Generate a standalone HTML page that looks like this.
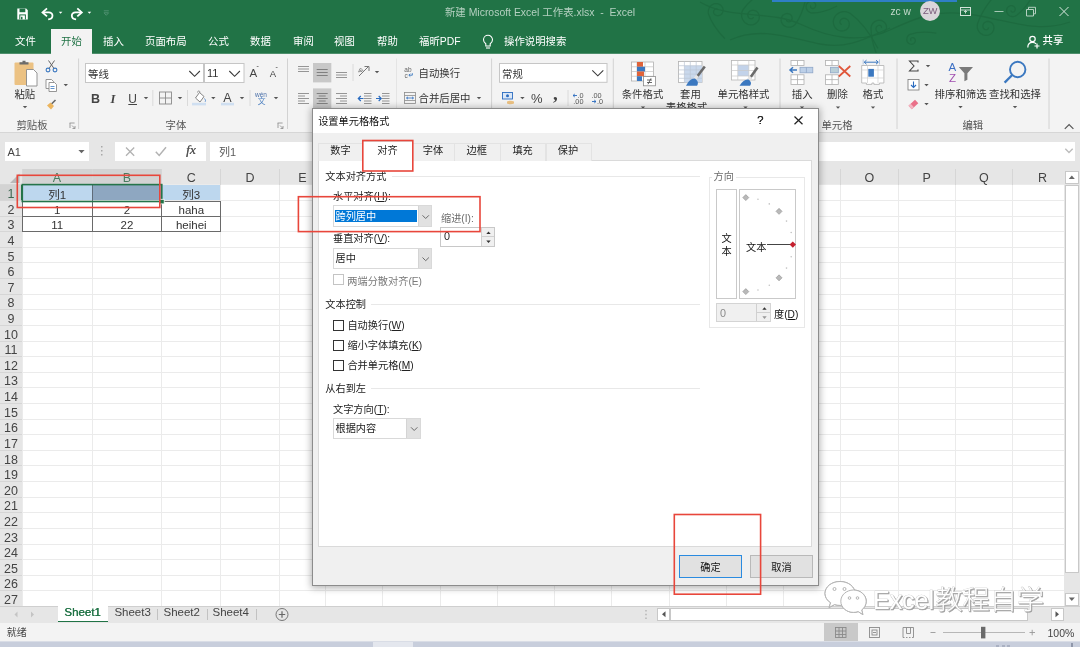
<!DOCTYPE html>
<html lang="zh-CN"><head><meta charset="utf-8"><title>Excel</title>
<style>
*{box-sizing:border-box;margin:0;padding:0}
html,body{width:1080px;height:647px;overflow:hidden;background:#fff}
#root{position:absolute;left:0;top:0;width:1080px;height:647px;overflow:hidden;will-change:transform}
body{font-family:"Liberation Sans","Noto Sans CJK SC",sans-serif;font-size:10.4px;color:#333;position:relative}
.a{position:absolute}
.t{position:absolute;white-space:nowrap;line-height:14px;height:14px}
.w{color:#fff}
.c{text-align:center}
#title{left:0;top:0;width:1080px;height:53px;background:#217346}
.gs{position:absolute;top:53px;height:1px;background:#4d8e6b;z-index:3}
#ribbon{left:0;top:53px;width:1080px;height:80px;background:#f3f3f3;border-bottom:1px solid #d6d6d6}
#fbar{left:0;top:133px;width:1080px;height:36px;background:#e6e6e6}
#grid{left:0;top:169px;width:1064px;height:437px;background:#fff;overflow:hidden}
.vl{position:absolute;top:0;width:1px;height:437px;background:#ebebeb}
.hl{position:absolute;left:0;height:1px;width:1064px;background:#ebebeb}
.ch{position:absolute;top:0;height:15.5px;line-height:19.5px;overflow:hidden;font-size:12.5px;color:#444;text-align:center}
.rh{position:absolute;left:0;width:22px;text-align:center;font-size:12.5px;color:#444;line-height:16px;height:15.6px}
.cell{position:absolute;text-align:center;font-size:11.5px;color:#333;line-height:16px;height:15.6px}
.sep{position:absolute;width:1px;background:#d8d8d8}
.grp{position:absolute;top:118px;height:14px;line-height:14px;font-size:10.4px;color:#555;text-align:center;white-space:nowrap}
.red{position:absolute;border:1.500px solid #e9493e}
.dd{position:absolute;background:#fff;border:1px solid #d9d9d9}
.ddb{position:absolute;right:0;top:0;bottom:0;width:13.500px;background:#e1e1e1;border-left:1px solid #d4d4d4}
.cb{position:absolute;width:11px;height:11px;border:1px solid #333;background:#fff}
.dl{position:absolute;font-size:10.2px;line-height:14px;height:14px;white-space:nowrap;color:#222}
u{text-decoration:underline}
</style></head>
<body>
<div id="root">
<div class="a" id="title">
<svg class="a" style="left:0;top:0" width="1080" height="53" viewBox="0 0 1080 53" fill="none" stroke="#1d6a3f" stroke-width="1.300" opacity="0.900"><path d="M724.9 38.7Q712.4 26.0 708.4 13.8L708.2 12.4L708.3 11.0L708.5 9.7L709.0 8.4L709.6 7.2L710.4 6.2L711.3 5.3L712.4 4.6L713.5 4.1L714.6 3.7L715.8 3.6L717.0 3.6L718.1 3.9L719.2 4.3L720.2 4.8L721.0 5.5L721.7 6.3L722.3 7.2L722.7 8.1L723.0 9.1L723.1 10.0L723.0 11.0L722.8 11.9L722.4 12.8L722.0 13.5L721.4 14.2L720.8 14.8L720.0 15.2L719.3 15.5L718.5 15.7L717.7 15.7L717.0 15.6L716.3 15.4L715.7 15.1L715.1 14.8L714.6 14.3L714.2 13.8L713.9 13.2L713.7 12.7L713.6 12.1L713.6 11.5L713.7 11.0L713.9 10.5L714.2 10.1L714.5 9.7L714.8 9.4L715.2 9.2L715.6 9.0L716.0 8.9L716.3 8.9L716.7 9.0L717.0 9.1L717.3 9.3L717.5 9.5L717.7 9.7L717.8 9.9"/><path d="M772.4 -13.7Q752.5 -3.4 743.1 9.5L742.3 11.1L741.8 12.7L741.6 14.4L741.6 16.0L741.9 17.6L742.4 19.1L743.2 20.5L744.1 21.7L745.2 22.8L746.5 23.6L747.8 24.3L749.2 24.7L750.6 24.9L752.0 24.8L753.4 24.6L754.6 24.1L755.8 23.4L756.8 22.6L757.7 21.7L758.4 20.6L758.9 19.5L759.2 18.3L759.3 17.2L759.3 16.0L759.0 14.9L758.6 13.9L758.1 12.9L757.4 12.1L756.6 11.4L755.7 10.9L754.8 10.5L753.9 10.3L752.9 10.2L752.0 10.3L751.1 10.5L750.3 10.9L749.6 11.3L749.0 11.9L748.5 12.5L748.1 13.2L747.9 13.9L747.8 14.6L747.8 15.3L747.9 16.0L748.1 16.6L748.4 17.2L748.7 17.7L749.2 18.1L749.6 18.4L750.1 18.6L750.6 18.7L751.1 18.8L751.6 18.7L752.0 18.6L752.4 18.4L752.7 18.2L753.0 17.9L753.2 17.6L753.3 17.3L753.3 17.0"/><path d="M807.0 -7.2Q803.7 12.6 795.3 24.3L794.3 25.3L793.1 26.1L791.9 26.7L790.6 27.0L789.3 27.2L788.0 27.2L786.7 26.9L785.6 26.5L784.5 25.9L783.5 25.2L782.7 24.3L782.0 23.3L781.6 22.3L781.3 21.2L781.1 20.1L781.2 19.0L781.4 18.0L781.8 17.0L782.3 16.1L782.9 15.3L783.7 14.7L784.5 14.2L785.3 13.8L786.2 13.6L787.1 13.5L788.0 13.6L788.8 13.8L789.6 14.1L790.3 14.5L790.9 15.0L791.4 15.6L791.7 16.3L792.0 17.0L792.1 17.7L792.2 18.3L792.1 19.0L791.9 19.6L791.6 20.2L791.3 20.7L790.9 21.1L790.4 21.4L789.9 21.6L789.4 21.8L788.9 21.8L788.4 21.8L788.0 21.7L787.6 21.5L787.2 21.3L787.0 21.1L786.7 20.8L786.6 20.4L786.5 20.1L786.4 19.8L786.5 19.5L786.5 19.2L786.6 19.0"/><path d="M877.9 48.4Q865.6 24.6 850.1 13.3L848.4 12.5L846.6 11.9L844.8 11.7L843.0 11.7L841.3 12.0L839.6 12.6L838.1 13.4L836.7 14.4L835.6 15.6L834.7 16.9L834.0 18.4L833.5 19.9L833.3 21.5L833.4 23.0L833.7 24.5L834.2 25.9L834.9 27.1L835.8 28.3L836.8 29.2L837.9 30.0L839.2 30.5L840.4 30.9L841.7 31.0L843.0 30.9L844.2 30.7L845.3 30.2L846.4 29.6L847.3 28.9L848.0 28.0L848.6 27.1L849.0 26.1L849.2 25.0L849.3 24.0L849.2 23.0L849.0 22.1L848.6 21.2L848.1 20.4L847.5 19.7L846.8 19.2L846.1 18.8L845.3 18.5L844.5 18.4L843.7 18.4L843.0 18.5L842.3 18.7L841.7 19.0L841.2 19.4L840.7 19.9L840.4 20.4L840.2 20.9L840.0 21.5L840.0 22.0L840.0 22.5L840.2 23.0L840.4 23.4L840.6 23.8L840.9 24.0L841.3 24.3L841.6 24.4L841.9 24.5"/><path d="M881.0 64.0Q871.0 44.0 871.0 28.0L871.2 26.6L871.7 25.3L872.3 24.1L873.1 23.0L874.1 22.1L875.2 21.3L876.3 20.8L877.5 20.4L878.8 20.2L880.0 20.3L881.2 20.5L882.3 20.9L883.3 21.5L884.2 22.2L885.0 23.0L885.6 23.9L886.1 24.9L886.4 25.9L886.5 27.0L886.5 28.0L886.2 29.0L885.9 29.9L885.4 30.8L884.8 31.5L884.1 32.1L883.3 32.6L882.5 33.0L881.7 33.2L880.8 33.2L880.0 33.2L879.2 33.0L878.5 32.7L877.8 32.3L877.3 31.8L876.8 31.2L876.4 30.6L876.2 29.9L876.0 29.3L876.0 28.6L876.1 28.0L876.3 27.4L876.5 26.9L876.9 26.4L877.3 26.0L877.7 25.7L878.2 25.5L878.6 25.3L879.1 25.3L879.6 25.3L880.0 25.4L880.4 25.5L880.7 25.7L881.0 26.0L881.2 26.3L881.4 26.6L881.5 26.9L881.5 27.2L881.5 27.5L881.5 27.8L881.4 28.0"/><path d="M837.2 6.0Q823.2 13.0 812.0 13.0L810.9 12.8L809.9 12.4L809.0 11.9L808.2 11.3L807.5 10.5L806.9 9.7L806.5 8.8L806.2 7.9L806.1 6.9L806.1 6.0L806.3 5.1L806.6 4.3L807.1 3.5L807.6 2.8L808.3 2.3L809.0 1.8L809.7 1.5L810.5 1.3L811.2 1.2L812.0 1.3L812.7 1.5L813.4 1.7L814.0 2.1L814.5 2.6L814.9 3.1L815.3 3.6L815.5 4.2L815.6 4.8L815.6 5.4L815.6 6.0L815.4 6.5L815.2 7.0L814.9 7.5L814.5 7.8L814.1 8.1L813.7 8.3L813.3 8.5L812.8 8.5L812.4 8.5L812.0 8.4L811.6 8.3L811.3 8.1L811.1 7.9L810.8 7.6L810.7 7.3L810.6 7.0L810.6 6.7L810.6 6.5L810.6 6.2L810.7 6.0L810.8 5.8L811.0 5.7"/><path d="M1000.2 -10.4Q982.9 7.2 977.5 23.9L977.3 25.5L977.3 27.0L977.5 28.5L978.0 29.9L978.7 31.2L979.6 32.4L980.6 33.4L981.8 34.2L983.0 34.8L984.3 35.2L985.7 35.3L987.0 35.3L988.3 35.1L989.5 34.6L990.6 34.0L991.5 33.3L992.4 32.4L993.0 31.4L993.5 30.3L993.8 29.2L993.9 28.1L993.9 27.0L993.7 25.9L993.3 25.0L992.8 24.1L992.1 23.3L991.4 22.6L990.5 22.1L989.7 21.8L988.8 21.5L987.9 21.5L987.0 21.5L986.2 21.7L985.4 22.1L984.7 22.5L984.1 23.0L983.6 23.6L983.3 24.3L983.0 25.0L982.9 25.7L982.9 26.3L983.0 27.0L983.1 27.6L983.4 28.2L983.8 28.6L984.2 29.0L984.6 29.4L985.1 29.6L985.6 29.7L986.1 29.8L986.6 29.7L987.0 29.6L987.4 29.5L987.7 29.2L988.0 29.0L988.2 28.7L988.4 28.4L988.4 28.0L988.5 27.7L988.4 27.5"/><path d="M1034.7 -7.7Q1026.5 8.1 1016.1 15.7L1015.1 16.1L1014.1 16.4L1013.0 16.6L1012.0 16.5L1011.0 16.3L1010.0 16.0L1009.2 15.5L1008.4 14.9L1007.8 14.2L1007.3 13.4L1006.9 12.6L1006.6 11.7L1006.6 10.9L1006.6 10.0L1006.8 9.2L1007.1 8.4L1007.5 7.7L1008.0 7.1L1008.6 6.6L1009.2 6.2L1009.9 5.9L1010.6 5.7L1011.3 5.7L1012.0 5.7L1012.6 5.9L1013.2 6.2L1013.8 6.5L1014.2 6.9L1014.6 7.4L1014.9 7.9L1015.1 8.4L1015.2 9.0L1015.2 9.5L1015.1 10.0L1015.0 10.5L1014.7 10.9L1014.5 11.3L1014.1 11.6L1013.8 11.8L1013.4 12.0L1013.0 12.1L1012.7 12.1L1012.3 12.1L1012.0 12.0L1011.7 11.8L1011.5 11.7L1011.3 11.4L1011.1 11.2L1011.0 11.0L1011.0 10.8L1011.0 10.5L1011.0 10.3"/><path d="M936.3 33.2Q920.8 30.8 910.1 34.3L909.3 34.7L908.6 35.3L908.0 36.0L907.5 36.7L907.1 37.5L906.9 38.3L906.8 39.2L906.8 40.0L906.9 40.8L907.2 41.6L907.6 42.2L908.1 42.8L908.7 43.3L909.3 43.7L909.9 44.0L910.6 44.2L911.3 44.3L912.0 44.2L912.6 44.1L913.2 43.8L913.8 43.5L914.3 43.1L914.6 42.6L914.9 42.1L915.2 41.6L915.3 41.1L915.3 40.5L915.3 40.0L915.1 39.5L914.9 39.1L914.6 38.7L914.3 38.3L914.0 38.0L913.6 37.8L913.2 37.7L912.8 37.7L912.4 37.7L912.0 37.7L911.7 37.9L911.4 38.0L911.1 38.2L910.9 38.5L910.7 38.7L910.6 39.0L910.6 39.3L910.6 39.5L910.6 39.8L910.7 40.0L910.8 40.2L911.0 40.3L911.1 40.5L911.3 40.5"/><path d="M700 2c30 18 70 8 100 22s60 20 90 6 50-22 90-14 60 16 90 6"/><path d="M730 40c30-14 60-2 90 4s50-8 70-16"/></svg><div class="a" style="left:772px;top:0;width:185px;height:1.5px;background:#2f7fc6"></div>
<svg class="a" style="left:0;top:0" width="130" height="28" viewBox="0 0 130 28" fill="none" stroke="#fff" stroke-width="1.3">
<path d="M17.300 8.600h8.900l1.600 1.600v9.200H17.300z" fill="#fff" stroke="none"/><rect x="19.500" y="8.600" width="5.800" height="3.600" fill="#217346" stroke="none"/><rect x="19.300" y="14.400" width="6.600" height="5" fill="#217346" stroke="none"/><rect x="20.300" y="15.400" width="4.600" height="4" fill="#fff" stroke="none"/><rect x="21" y="16.800" width="1.500" height="2.600" fill="#217346" stroke="none"/>
<path d="M47 8.400L42.500 12.400L47 16.400" stroke-width="1.800"/><path d="M43.200 12.400H48.800C53.600 12.400 54 18.800 48.200 19.300" stroke-width="1.800"/>
<path d="M58.800 11.800h3.600l-1.800 2z" fill="#fff" stroke="none"/>
<path d="M77.300 8.400L81.800 12.400L77.300 16.400" stroke-width="1.800"/><path d="M81.100 12.400H75.500C70.700 12.400 70.300 18.800 76.100 19.300" stroke-width="1.800"/>
<path d="M87.600 11.800h3.600l-1.800 2z" fill="#fff" stroke="none"/>
<path d="M103.800 10.800h5M104 12.800l2.300 2.500 2.300-2.500z" stroke="#4f9070" stroke-width="1"/>
</svg><div class="t" style="left:0;width:1080px;top:5.5px;text-align:center;color:#b4d0c0;font-size:10.45px;word-spacing:0px">新建 Microsoft Excel 工作表.xlsx &nbsp;-&nbsp; Excel</div>
<div class="t" style="left:890.5px;top:4.5px;color:#c3dacc;font-size:10.2px">zc w</div>
<div class="a" style="left:920px;top:1.2px;width:20px;height:20px;border-radius:50%;background:#dad6da;color:#7b5c7b;font-size:9.4px;line-height:20.5px;text-align:center;letter-spacing:-0.3px">ZW</div>
<svg class="a" style="left:955px;top:0" width="125" height="53" viewBox="0 0 125 53" fill="none" stroke="#fff" stroke-width="1">
<rect x="5.500" y="7.500" width="10" height="8" stroke="#d3e3d9"/><path d="M5.500 10h10M10.500 10.500v3M9 12l1.500-1.500L12 12" stroke="#d3e3d9" stroke-width="0.9"/>
<path d="M39.500 11.500h9" stroke="#a5c8b4"/>
<path d="M71.500 9.500h7v6.500h-7zM73.500 9.300v-2h7v6.500h-2" stroke="#b4d0c0"/>
<path d="M104.500 7l9 9M113.500 7l-9 9" stroke="#dbe8e0" stroke-width="1"/>
<circle cx="77.500" cy="39" r="2.700" stroke-width="1.200"/><path d="M72.800 47.500c0-3.600 2-5.200 4.700-5.200 1.600 0 2.800 0.500 3.600 1.500" stroke-width="1.200"/><path d="M82 43.500v5M79.500 46h5" stroke-width="1.2"/>
</svg><div class="t w" style="left:1042.5px;top:33.5px;font-size:10.4px;font-weight:500">共享</div>
<div class="a" style="left:51px;top:29px;width:41px;height:25px;background:#f3f3f3"></div>
<div class="t" style="left:15px;top:34.600px;color:#fff;font-size:10.4px">文件</div>
<div class="t" style="left:61px;top:34.600px;color:#217346;font-size:10.4px">开始</div>
<div class="t" style="left:103px;top:34.600px;color:#fff;font-size:10.4px">插入</div>
<div class="t" style="left:145px;top:34.600px;color:#fff;font-size:10.4px">页面布局</div>
<div class="t" style="left:208px;top:34.600px;color:#fff;font-size:10.4px">公式</div>
<div class="t" style="left:250px;top:34.600px;color:#fff;font-size:10.4px">数据</div>
<div class="t" style="left:293px;top:34.600px;color:#fff;font-size:10.4px">审阅</div>
<div class="t" style="left:334px;top:34.600px;color:#fff;font-size:10.4px">视图</div>
<div class="t" style="left:377px;top:34.600px;color:#fff;font-size:10.4px">帮助</div>
<div class="t" style="left:419px;top:34.600px;color:#fff;font-size:10.4px">福昕PDF</div>
<div class="t" style="left:504px;top:34.600px;color:#fff;font-size:10.4px">操作说明搜索</div>
<svg class="a" style="left:480px;top:32px" width="18" height="20" viewBox="0 0 18 20" fill="none" stroke="#fff" stroke-width="1.1">
<path d="M5.800 11.800c-1.500-1.200-2.300-2.500-2.300-4.100a4.500 4.500 0 0 1 9 0c0 1.600-0.800 2.900-2.300 4.100v2.200H5.800z"/><path d="M6 16h4"/></svg></div>
<div class="gs" style="left:0;width:51px"></div><div class="gs" style="left:92px;width:988px"></div>
<div class="a" id="ribbon">
<svg class="a" style="left:0;top:0" width="1080" height="80" viewBox="0 53 1080 80" fill="none" stroke-linecap="butt">
<path d="M78.6 58.5V129" stroke="#d2d2d2" stroke-width="1"/><path d="M287.5 58.5V129" stroke="#d2d2d2" stroke-width="1"/><path d="M396.5 58.5V129" stroke="#e4e4e4" stroke-width="1"/><path d="M491.6 58.5V129" stroke="#d2d2d2" stroke-width="1"/><path d="M613.3 58.5V129" stroke="#d2d2d2" stroke-width="1"/><path d="M780 58.5V129" stroke="#d2d2d2" stroke-width="1"/><path d="M897 58.5V129" stroke="#d2d2d2" stroke-width="1"/><path d="M1049 58.5V129" stroke="#d2d2d2" stroke-width="1"/><path d="M152.8 90V106" stroke="#dadada" stroke-width="1"/><path d="M187.5 90V106" stroke="#dadada" stroke-width="1"/><path d="M250 90V106" stroke="#dadada" stroke-width="1"/><path d="M353 64V81" stroke="#dadada" stroke-width="1"/><path d="M568 90V106" stroke="#dadada" stroke-width="1"/><rect x="14.5" y="62.500" width="19" height="22.500" rx="1" fill="#ecc283" stroke="none"/><path d="M19.500 64.500v-2.200h3v-1.600h3v1.600h3v2.200z" fill="#6b6b6b" stroke="none"/><path d="M26.500 69.500h7l3.500 3.500v13h-10.500z" fill="#fff" stroke="#8a8a8a" stroke-width="0.9"/><path d="M22.8 105.9h4.4l-2.2 2.3z" fill="#555" stroke="none"/><path d="M48.500 60.500l5.500 8M54.500 60.500l-5.500 8" stroke="#666" stroke-width="1"/><circle cx="48" cy="70" r="1.900" stroke="#3b78c0" stroke-width="1.100"/><circle cx="55" cy="70" r="1.900" stroke="#3b78c0" stroke-width="1.100"/><path d="M46 79.500h5.500l2 2v7h-7.500z" stroke="#8a8a8a" stroke-width="0.900" fill="#fff"/><path d="M49 82.500h5.500l2 2v7h-7.500z" stroke="#8a8a8a" stroke-width="0.900" fill="#fff"/><path d="M50.500 86.500h4M50.500 88.500h4" stroke="#3b78c0" stroke-width="0.800"/><path d="M63.6 83.9h4.4l-2.2 2.3z" fill="#555" stroke="none"/><path d="M55.500 100l-4 4" stroke="#666" stroke-width="1.600"/><path d="M47 105.500l3.500-3 3.500 3.500-3 3.500z" fill="#ecb55e" stroke="none"/><path d="M70 123v5M69.6 123h5" stroke="#888" stroke-width="0.800"/><path d="M72 125.500l2.800 2.800M75 126v2.500h-2.500" stroke="#888" stroke-width="0.800"/><path d="M278 123v5M277.6 123h5" stroke="#888" stroke-width="0.800"/><path d="M280 125.500l2.800 2.800M283 126v2.500h-2.500" stroke="#888" stroke-width="0.800"/><rect x="85.500" y="63.500" width="118" height="19" fill="#fff" stroke="#c6c6c6" stroke-width="1"/><rect x="204.500" y="63.500" width="39.500" height="19" fill="#fff" stroke="#c6c6c6" stroke-width="1"/><path d="M189.300 71l5.300 5.300 5.300-5.300" stroke="#3a3a3a" stroke-width="1.100"/><path d="M229.300 71l5.300 5.300 5.300-5.300" stroke="#3a3a3a" stroke-width="1.100"/><rect x="159.500" y="92" width="12" height="12" stroke="#8a8a8a" stroke-width="0.900"/><path d="M165.500 92v12M159.500 98h12" stroke="#8a8a8a" stroke-width="0.900"/><path d="M143.8 96.9h4.4l-2.2 2.3z" fill="#555" stroke="none"/><path d="M177.8 96.9h4.4l-2.2 2.3z" fill="#555" stroke="none"/><path d="M211.1 96.9h4.4l-2.2 2.3z" fill="#555" stroke="none"/><path d="M239.8 96.9h4.4l-2.2 2.3z" fill="#555" stroke="none"/><path d="M273.8 96.9h4.4l-2.2 2.3z" fill="#555" stroke="none"/><path d="M195.500 98l4-5.500 4.500 4-4 5.500z" stroke="#777" stroke-width="0.900" fill="#fff"/><path d="M197.500 92.500c0-2 2.500-2 2.500 0" stroke="#777" stroke-width="0.800"/><path d="M204.500 98.500c1 1.500 1.500 2.500 0.500 3.300" stroke="#5b8fd0" stroke-width="1"/><rect x="192" y="102.800" width="14" height="2.600" fill="#cfdff1" stroke="none"/><rect x="221" y="102.800" width="13" height="2.600" fill="#cfdff1" stroke="none"/><rect x="313" y="63" width="18.300" height="19.400" fill="#c8c8c8" stroke="none"/><rect x="313" y="88.400" width="18.300" height="19.600" fill="#c8c8c8" stroke="none"/><path d="M298 66.5h11M298 69h11M298 71.5h11" stroke="#8a8a8a" stroke-width="0.900"/><path d="M316.7 69.5h11M316.7 72.5h11M316.7 75.5h11" stroke="#777" stroke-width="0.900"/><path d="M336 72.5h11M336 75h11M336 77.5h11" stroke="#8a8a8a" stroke-width="0.900"/><path d="M298 93.5h11M298 96h7M298 98.5h11M298 101h7M298 103.5h11" stroke="#8a8a8a" stroke-width="0.900"/><path d="M316.7 93.5h11M318.7 96h7M316.7 98.5h11M318.7 101h7M316.7 103.5h11" stroke="#777" stroke-width="0.900"/><path d="M336 93.5h11M340 96h7M336 98.5h11M340 101h7M336 103.5h11" stroke="#8a8a8a" stroke-width="0.900"/><path d="M359 76l9-9" stroke="#777" stroke-width="1"/><path d="M364.500 66.500h4.500v4.500" stroke="#777" stroke-width="1"/><path d="M359.500 69.500l3 3M358.500 72l2-4 2.500 2.500z" stroke="#777" stroke-width="0.700"/><path d="M374.8 70.9h4.4l-2.2 2.3z" fill="#555" stroke="none"/><path d="M364 93.5h7.5M364 96h7.5M364 98.5h7.5M364 101h7.5M364 103.5h7.5" stroke="#8a8a8a" stroke-width="0.900"/><path d="M363.500 98.500h-5M360.800 96l-2.500 2.500 2.500 2.500" stroke="#2b6cc0" stroke-width="1.200"/><path d="M382 93.5h7.5M382 96h7.5M382 98.5h7.5M382 101h7.5M382 103.5h7.5" stroke="#8a8a8a" stroke-width="0.900"/><path d="M376 98.500h5M378.700 96l2.500 2.500-2.500 2.500" stroke="#2b6cc0" stroke-width="1.200"/><path d="M412.300 73.200v2h-3.300M410.300 73.800l-1.500 1.400 1.500 1.400" stroke="#3b78c0" stroke-width="0.900"/><path d="M412 68.300l1.500-1.500 1.500 1.500" stroke="#3b78c0" stroke-width="0.800" opacity="0"/><rect x="404.500" y="92.500" width="11" height="11" stroke="#8a8a8a" stroke-width="0.800"/><path d="M404.500 95.500h11M404.500 100.500h11" stroke="#8a8a8a" stroke-width="0.800"/><path d="M406.500 98h7M408 96.800l-1.500 1.200 1.500 1.200M412 96.800l1.500 1.200-1.500 1.200" stroke="#2b6cc0" stroke-width="0.800"/><path d="M476.8 96.9h4.4l-2.2 2.3z" fill="#555" stroke="none"/><rect x="499.500" y="63.500" width="107.500" height="18.800" fill="#fff" stroke="#c6c6c6" stroke-width="1"/><path d="M592.300 70.300l5.500 5.500 5.500-5.500" stroke="#3a3a3a" stroke-width="1.100"/><rect x="502.500" y="92.500" width="10" height="6.500" stroke="#2b6cc0" stroke-width="0.900" fill="#dbe7f6"/><circle cx="507.500" cy="95.800" r="1.500" fill="#2b6cc0" stroke="none"/><path d="M507 101.500c2-1 5-1 7 0v2c-2 1-5 1-7 0z" fill="#ecc283" stroke="none"/><path d="M520.2 96.9h4.4l-2.2 2.3z" fill="#555" stroke="none"/><path d="M573 95.500h4M574.800 94l-1.800 1.500 1.800 1.500" stroke="#2b6cc0" stroke-width="0.900"/><path d="M592 101.500h4M594.200 100l1.800 1.500-1.800 1.500" stroke="#2b6cc0" stroke-width="0.900"/><rect x="631.500" y="62" width="22" height="19" fill="#fff" stroke="#b0b0b0" stroke-width="0.800"/><path d="M637 62v19M645 62v19M631.500 66.750h22M631.500 71.500h22M631.500 76.250h22" stroke="#c4c4c4" stroke-width="0.700"/><rect x="637" y="62" width="6" height="4.750" fill="#e0633a" stroke="none"/><rect x="637" y="66.750" width="8" height="4.750" fill="#3b78c0" stroke="none"/><rect x="637" y="71.500" width="7" height="4.750" fill="#e0633a" stroke="none"/><rect x="637" y="76.250" width="5" height="4.750" fill="#3b78c0" stroke="none"/><rect x="643.500" y="76.500" width="12" height="9.300" fill="#fff" stroke="#8a8a8a" stroke-width="0.800"/><path d="M647 80h5M647 82.500h5M651 78.300l-3 6" stroke="#444" stroke-width="0.800"/><path d="M640.8 106.4h4.4l-2.2 2.3z" fill="#555" stroke="none"/><path d="M743.3 106.4h4.4l-2.2 2.3z" fill="#555" stroke="none"/><rect x="678.500" y="61.500" width="23.500" height="21" fill="#fff" stroke="#b0b0b0" stroke-width="0.800"/><rect x="684.400" y="65.700" width="17.600" height="16.800" fill="#c9d8ec" stroke="none"/><path d="M684.400 61.500v21M690.300 61.500v21M696.200 61.500v21M678.500 65.700h23.500M678.500 69.900h23.500M678.500 74.100h23.500M678.500 78.300h23.500" stroke="#bcc6d4" stroke-width="0.700"/><path d="M704.800 66.500l-8 10.500" stroke="#6a6a6a" stroke-width="2.600"/><path d="M697.500 75.800l-3 3.500" stroke="#e6e6e6" stroke-width="3.200"/><path d="M695 78.500c-3.500-0.500-6.500 2.500-9 7.200h11c1.500-2 1.300-4.700-2-7.200z" fill="#3b78c0" stroke="none"/><rect x="731.500" y="60.500" width="23.500" height="19.500" fill="#fff" stroke="#b6b6b6" stroke-width="0.800"/><rect x="737.800" y="65" width="11" height="11" fill="#c3d3ea" stroke="none"/><path d="M737.800 60.500v19.500M748.800 60.500v19.500M731.500 65h23.500M731.500 70.500h23.500M731.500 76h23.500" stroke="#c9c9c9" stroke-width="0.700"/><path d="M757.500 67.500l-7.500 10.500" stroke="#6a6a6a" stroke-width="2.600"/><path d="M750.800 76.800l-2.500 3" stroke="#e6e6e6" stroke-width="3.200"/><path d="M748.500 79.500c-3.500-0.500-6.500 2-9 6.200h10.500c1.500-1.800 1.500-4-1.500-6.200z" fill="#3b78c0" stroke="none"/><rect x="791" y="60.500" width="13" height="5" fill="#fff" stroke="#b0b0b0" stroke-width="0.800"/><path d="M797.500 60.500v5" stroke="#b0b0b0" stroke-width="0.800"/><rect x="800" y="67.300" width="12.800" height="5.500" fill="#bdd0e8" stroke="#8fa7c8" stroke-width="0.800"/><path d="M806.400 67.300v5.500" stroke="#8fa7c8" stroke-width="0.800"/><rect x="791" y="74.800" width="13" height="9.600" fill="#fff" stroke="#b0b0b0" stroke-width="0.800"/><path d="M797.500 74.800v9.600M791 79.600h13" stroke="#b0b0b0" stroke-width="0.800"/><path d="M790 70h7M793 67.200l-3 2.800 3 2.800" stroke="#3b78c0" stroke-width="1.500"/><path d="M799.8 106.4h4.4l-2.2 2.3z" fill="#555" stroke="none"/><rect x="825.500" y="60.500" width="12.800" height="5" fill="#fff" stroke="#b0b0b0" stroke-width="0.800"/><path d="M832 60.500v5" stroke="#b0b0b0" stroke-width="0.800"/><rect x="830.500" y="67.300" width="7.800" height="5.500" fill="#b9cfd8" stroke="#8fa7c8" stroke-width="0.800"/><rect x="825.500" y="74.800" width="12.800" height="9.600" fill="#fff" stroke="#b0b0b0" stroke-width="0.800"/><path d="M832 74.800v9.600M825.500 79.600h12.800" stroke="#b0b0b0" stroke-width="0.800"/><path d="M838.800 66l11.500 10.500M850.300 66l-11.500 10.500" stroke="#e0563a" stroke-width="1.700"/><path d="M835.8 106.4h4.4l-2.2 2.3z" fill="#555" stroke="none"/><path d="M864.500 62.200h13.500M866.500 60.200l-2.300 2 2.300 2M876 60.200l2.300 2-2.300 2" stroke="#3b78c0" stroke-width="1"/><path d="M863.200 59.500v5M879.500 59.500v5" stroke="#9ab3d6" stroke-width="0.700"/><path d="M861.700 65.500h22.200v17.500h-4.500v1.400h-5.500v-1.400h-2v1.400h-5.500v-1.400h-4.700z" fill="#fff" stroke="#b0b0b0" stroke-width="0.800"/><path d="M867.500 65.500v17.500M878 65.500v17.500M861.700 70h22.200M861.700 78h22.200" stroke="#d0d0d0" stroke-width="0.700"/><rect x="868.300" y="68.900" width="5.600" height="7.800" fill="#3b78c0" stroke="none"/><path d="M870.8 106.4h4.4l-2.2 2.3z" fill="#555" stroke="none"/><path d="M918 62.500v-1.500h-8.500l4.500 5-4.500 5h8.500v-1.500" stroke="#444" stroke-width="1.100"/><path d="M925.8 64.9h4.4l-2.2 2.3z" fill="#555" stroke="none"/><path d="M924.3 83.9h4.4l-2.2 2.3z" fill="#555" stroke="none"/><path d="M924.3 102.9h4.4l-2.2 2.3z" fill="#555" stroke="none"/><rect x="908" y="79.500" width="11" height="10.500" fill="#fff" stroke="#777" stroke-width="0.800"/><path d="M913.500 81.500v6M911 85l2.500 2.500 2.500-2.500" stroke="#2b6cc0" stroke-width="1.100"/><path d="M908.500 105.800l6.500-6 3.300 3.500-6.500 6z" fill="#ea7089" stroke="none"/><path d="M908.500 105.800l2.200-2 3.300 3.500-2.200 2z" fill="#f2b6c2" stroke="none"/><path d="M958.800 67h14.200l-5.600 6.300v6.400l-3 1.500v-7.900z" fill="#7a7a7a" stroke="none"/><circle cx="1017.700" cy="69.500" r="7.700" stroke="#3b78c0" stroke-width="1.900"/><path d="M1012.200 75l-7.600 7.600" stroke="#3b78c0" stroke-width="2.300"/><path d="M958.3 105.9h4.4l-2.2 2.3z" fill="#555" stroke="none"/><path d="M1012.8 105.9h4.4l-2.2 2.3z" fill="#555" stroke="none"/><path d="M1064.800 128.800l4.300-4.300 4.300 4.300" stroke="#555" stroke-width="1.200"/></svg>
<div class="t" style="left:14.4px;top:35.4px;font-size:10.4px;color:#333;">粘贴</div>
<div class="t c" style="left:-28px;width:120px;top:66px;font-size:10.4px;color:#555;">剪贴板</div>
<div class="t c" style="left:116px;width:120px;top:66px;font-size:10.4px;color:#555;">字体</div>
<div class="t" style="left:88px;top:14.5px;font-size:10.4px;color:#333;">等线</div>
<div class="t" style="left:207px;top:13.3px;font-size:11px;color:#333;">11</div>
<div class="t" style="left:249.5px;top:13.3px;font-size:11.5px;color:#444;">A</div>
<div class="t" style="left:256.5px;top:8.5px;font-size:7px;color:#444;">ˆ</div>
<div class="t" style="left:269.8px;top:14.3px;font-size:9.5px;color:#444;">A</div>
<div class="t" style="left:275.5px;top:9.5px;font-size:7px;color:#444;">ˇ</div>
<div class="t" style="left:91px;top:39px;font-size:12.5px;color:#444;font-weight:bold">B</div>
<div class="t" style="left:110.5px;top:39px;font-size:12.5px;color:#444;font-style:italic;font-family:'Liberation Serif',serif;font-weight:bold">I</div>
<div class="t" style="left:128.3px;top:39px;font-size:12px;color:#444;text-decoration:underline">U</div>
<div class="t" style="left:223.3px;top:37.5px;font-size:12.5px;color:#444;">A</div>
<div class="t" style="left:255px;top:34.5px;font-size:6.5px;color:#4a6fa8;">wén</div>
<div class="t" style="left:257.8px;top:41.5px;font-size:7.8px;color:#4a7fc0;">文</div>
<div class="t" style="left:404.3px;top:10.3px;font-size:6.5px;color:#666;">ab</div>
<div class="t" style="left:404.6px;top:15.8px;font-size:6.5px;color:#666;">c</div>
<div class="t" style="left:418.5px;top:13.7px;font-size:10.4px;color:#333;">自动换行</div>
<div class="t" style="left:418.5px;top:39px;font-size:10.4px;color:#333;">合并后居中</div>
<div class="t" style="left:502px;top:14.5px;font-size:10.4px;color:#333;">常规</div>
<div class="t" style="left:531px;top:39px;font-size:13px;color:#444;">%</div>
<div class="t" style="left:553px;top:33.5px;font-size:19px;color:#444;font-weight:bold;font-family:'Liberation Serif',serif">,</div>
<div class="t" style="left:577.5px;top:35.5px;font-size:7.3px;color:#555;">.0</div>
<div class="t" style="left:573.3px;top:42.3px;font-size:7.3px;color:#555;">.00</div>
<div class="t" style="left:591.5px;top:35.5px;font-size:7.3px;color:#555;">.00</div>
<div class="t" style="left:597px;top:42.3px;font-size:7.3px;color:#555;">.0</div>
<div class="t c" style="left:582.5px;width:120px;top:35.4px;font-size:10.4px;color:#333;">条件格式</div>
<div class="t c" style="left:630.5px;width:120px;top:35.4px;font-size:10.4px;color:#333;">套用</div>
<div class="t c" style="left:629.5px;width:120px;top:48.2px;font-size:10.4px;color:#333;">表格格式 <span style="font-size:6px">▾</span></div>
<div class="t c" style="left:683.5px;width:120px;top:35.4px;font-size:10.4px;color:#333;">单元格样式</div>
<div class="t c" style="left:742.2px;width:120px;top:35.4px;font-size:10.4px;color:#333;">插入</div>
<div class="t c" style="left:777.5px;width:120px;top:35.4px;font-size:10.4px;color:#333;">删除</div>
<div class="t c" style="left:813px;width:120px;top:35.4px;font-size:10.4px;color:#333;">格式</div>
<div class="t c" style="left:777px;width:120px;top:65.5px;font-size:10.4px;color:#555;">单元格</div>
<div class="t" style="left:948.6px;top:6.8px;font-size:11.5px;color:#3b6fc4;">A</div>
<div class="t" style="left:949px;top:18px;font-size:11.5px;color:#a04fb0;">Z</div>
<div class="t c" style="left:900.6px;width:120px;top:35.4px;font-size:10.4px;color:#333;">排序和筛选</div>
<div class="t c" style="left:955px;width:120px;top:35.4px;font-size:10.4px;color:#333;">查找和选择</div>
<div class="t c" style="left:912.8px;width:120px;top:65.5px;font-size:10.4px;color:#555;">编辑</div>
</div>
<div class="a" id="fbar">
<div class="a" style="left:5px;top:9px;width:84px;height:18.500px;background:#fff"></div><div class="a" style="left:115px;top:9px;width:90.500px;height:18.500px;background:#fff"></div><div class="a" style="left:210px;top:9px;width:864.800px;height:18.500px;background:#fff"></div>
<div class="t" style="left:7.500px;top:11.500px;font-size:11px;color:#444">A1</div><div class="t" style="left:219px;top:11.500px;font-size:11px;color:#5a5a5a">列1</div>
<svg class="a" style="left:0;top:0" width="1080" height="36" viewBox="0 133 1080 36" fill="none">
<path d="M78.400 150h6.200l-3.100 3.300z" fill="#666"/>
<path d="M101.800 146v1.400M101.800 150v1.400M101.800 154v1.400" stroke="#9a9a9a" stroke-width="1.200"/>
<path d="M126 147.500l8.200 8.200M134.200 147.500l-8.200 8.200" stroke="#b2b2b2" stroke-width="1.300"/>
<path d="M155.800 151.800l3.400 3.600 6.800-8.200" stroke="#b2b2b2" stroke-width="1.500"/>
<path d="M1065.300 148.800l3.700 3.700 3.700-3.700" stroke="#bcbcbc" stroke-width="1.400"/>
</svg><div class="t" style="left:186px;top:10px;font-size:13.500px;color:#555;text-shadow:0.300px 0 0 #555;font-family:'Liberation Serif',serif;font-style:italic">fx</div>
</div>
<div class="a" id="grid">
<div class="a" style="left:0;top:0;width:1064px;height:15.500px;background:#e6e6e6"></div><div class="a" style="left:0;top:15.500px;width:22.300px;height:422px;background:#e6e6e6"></div><div class="a" style="left:22.300px;top:0;width:139.500px;height:15.500px;background:#d3d3d3;border-bottom:1px solid #217346"></div><div class="a" style="left:0;top:15.500px;width:22.300px;height:16.900px;background:#d3d3d3;border-right:1px solid #217346"></div><svg class="a" style="left:0;top:0" width="23" height="16" viewBox="0 0 23 16"><path d="M19.500 4.500v9.500h-9.500z" fill="#b9b9b9"/></svg>
<div class="a" style="left:22.300px;top:15.500px;width:70px;height:16.900px;background:#bdd7ee"></div><div class="a" style="left:92px;top:15.500px;width:69.800px;height:16.900px;background:#8ea7c1"></div><div class="a" style="left:161.800px;top:15.500px;width:59px;height:16.900px;background:#bdd7ee"></div>
<div class="vl" style="left:21.5px;"></div><div class="vl" style="left:91.5px;"></div><div class="vl" style="left:161.3px;"></div><div class="vl" style="left:220.3px;"></div><div class="vl" style="left:278.7px;"></div><div class="vl" style="left:325.1px;"></div><div class="vl" style="left:382.35px;"></div><div class="vl" style="left:439.6px;"></div><div class="vl" style="left:496.85px;"></div><div class="vl" style="left:554.1px;"></div><div class="vl" style="left:611.35px;"></div><div class="vl" style="left:668.6px;"></div><div class="vl" style="left:725.85px;"></div><div class="vl" style="left:783.1px;"></div><div class="vl" style="left:840.35px;"></div><div class="vl" style="left:897.6px;"></div><div class="vl" style="left:954.85px;"></div><div class="vl" style="left:1012.1px;"></div><div class="hl" style="top:15px"></div><div class="hl" style="top:31.015px"></div><div class="hl" style="top:46.63px"></div><div class="hl" style="top:62.245px"></div><div class="hl" style="top:77.86px"></div><div class="hl" style="top:93.475px"></div><div class="hl" style="top:109.09px"></div><div class="hl" style="top:124.705px"></div><div class="hl" style="top:140.32px"></div><div class="hl" style="top:155.935px"></div><div class="hl" style="top:171.55px"></div><div class="hl" style="top:187.165px"></div><div class="hl" style="top:202.78px"></div><div class="hl" style="top:218.395px"></div><div class="hl" style="top:234.01px"></div><div class="hl" style="top:249.625px"></div><div class="hl" style="top:265.24px"></div><div class="hl" style="top:280.855px"></div><div class="hl" style="top:296.47px"></div><div class="hl" style="top:312.085px"></div><div class="hl" style="top:327.7px"></div><div class="hl" style="top:343.315px"></div><div class="hl" style="top:358.93px"></div><div class="hl" style="top:374.545px"></div><div class="hl" style="top:390.16px"></div><div class="hl" style="top:405.775px"></div><div class="hl" style="top:421.39px"></div><div class="hl" style="top:437.005px"></div>
<div class="a" style="left:21.5px;top:0;width:1px;height:15.500px;background:#d6d6d6"></div><div class="a" style="left:91.5px;top:0;width:1px;height:15.500px;background:#d6d6d6"></div><div class="a" style="left:161.3px;top:0;width:1px;height:15.500px;background:#d6d6d6"></div><div class="a" style="left:220.3px;top:0;width:1px;height:15.500px;background:#d6d6d6"></div><div class="a" style="left:278.7px;top:0;width:1px;height:15.500px;background:#d6d6d6"></div><div class="a" style="left:325.1px;top:0;width:1px;height:15.500px;background:#d6d6d6"></div><div class="a" style="left:382.35px;top:0;width:1px;height:15.500px;background:#d6d6d6"></div><div class="a" style="left:439.6px;top:0;width:1px;height:15.500px;background:#d6d6d6"></div><div class="a" style="left:496.85px;top:0;width:1px;height:15.500px;background:#d6d6d6"></div><div class="a" style="left:554.1px;top:0;width:1px;height:15.500px;background:#d6d6d6"></div><div class="a" style="left:611.35px;top:0;width:1px;height:15.500px;background:#d6d6d6"></div><div class="a" style="left:668.6px;top:0;width:1px;height:15.500px;background:#d6d6d6"></div><div class="a" style="left:725.85px;top:0;width:1px;height:15.500px;background:#d6d6d6"></div><div class="a" style="left:783.1px;top:0;width:1px;height:15.500px;background:#d6d6d6"></div><div class="a" style="left:840.35px;top:0;width:1px;height:15.500px;background:#d6d6d6"></div><div class="a" style="left:897.6px;top:0;width:1px;height:15.500px;background:#d6d6d6"></div><div class="a" style="left:954.85px;top:0;width:1px;height:15.500px;background:#d6d6d6"></div><div class="a" style="left:1012.1px;top:0;width:1px;height:15.500px;background:#d6d6d6"></div><div class="a" style="left:0;top:15px;width:22.300px;height:1px;background:#d6d6d6"></div><div class="a" style="left:0;top:31.015px;width:22.300px;height:1px;background:#d6d6d6"></div><div class="a" style="left:0;top:46.63px;width:22.300px;height:1px;background:#d6d6d6"></div><div class="a" style="left:0;top:62.245px;width:22.300px;height:1px;background:#d6d6d6"></div><div class="a" style="left:0;top:77.86px;width:22.300px;height:1px;background:#d6d6d6"></div><div class="a" style="left:0;top:93.475px;width:22.300px;height:1px;background:#d6d6d6"></div><div class="a" style="left:0;top:109.09px;width:22.300px;height:1px;background:#d6d6d6"></div><div class="a" style="left:0;top:124.705px;width:22.300px;height:1px;background:#d6d6d6"></div><div class="a" style="left:0;top:140.32px;width:22.300px;height:1px;background:#d6d6d6"></div><div class="a" style="left:0;top:155.935px;width:22.300px;height:1px;background:#d6d6d6"></div><div class="a" style="left:0;top:171.55px;width:22.300px;height:1px;background:#d6d6d6"></div><div class="a" style="left:0;top:187.165px;width:22.300px;height:1px;background:#d6d6d6"></div><div class="a" style="left:0;top:202.78px;width:22.300px;height:1px;background:#d6d6d6"></div><div class="a" style="left:0;top:218.395px;width:22.300px;height:1px;background:#d6d6d6"></div><div class="a" style="left:0;top:234.01px;width:22.300px;height:1px;background:#d6d6d6"></div><div class="a" style="left:0;top:249.625px;width:22.300px;height:1px;background:#d6d6d6"></div><div class="a" style="left:0;top:265.24px;width:22.300px;height:1px;background:#d6d6d6"></div><div class="a" style="left:0;top:280.855px;width:22.300px;height:1px;background:#d6d6d6"></div><div class="a" style="left:0;top:296.47px;width:22.300px;height:1px;background:#d6d6d6"></div><div class="a" style="left:0;top:312.085px;width:22.300px;height:1px;background:#d6d6d6"></div><div class="a" style="left:0;top:327.7px;width:22.300px;height:1px;background:#d6d6d6"></div><div class="a" style="left:0;top:343.315px;width:22.300px;height:1px;background:#d6d6d6"></div><div class="a" style="left:0;top:358.93px;width:22.300px;height:1px;background:#d6d6d6"></div><div class="a" style="left:0;top:374.545px;width:22.300px;height:1px;background:#d6d6d6"></div><div class="a" style="left:0;top:390.16px;width:22.300px;height:1px;background:#d6d6d6"></div><div class="a" style="left:0;top:405.775px;width:22.300px;height:1px;background:#d6d6d6"></div><div class="a" style="left:0;top:421.39px;width:22.300px;height:1px;background:#d6d6d6"></div><div class="a" style="left:0;top:437.005px;width:22.300px;height:1px;background:#d6d6d6"></div>
<div class="ch" style="left:22px;width:70px;color:#4a7b60">A</div><div class="ch" style="left:92px;width:69.8px;color:#4a7b60">B</div><div class="ch" style="left:161.8px;width:59px;color:#444">C</div><div class="ch" style="left:220.8px;width:58.4px;color:#444">D</div><div class="ch" style="left:279.2px;width:46.4px;color:#444">E</div><div class="ch" style="left:325.6px;width:57.25px;color:#444">F</div><div class="ch" style="left:382.85px;width:57.25px;color:#444">G</div><div class="ch" style="left:440.1px;width:57.25px;color:#444">H</div><div class="ch" style="left:497.35px;width:57.25px;color:#444">I</div><div class="ch" style="left:554.6px;width:57.25px;color:#444">J</div><div class="ch" style="left:611.85px;width:57.25px;color:#444">K</div><div class="ch" style="left:669.1px;width:57.25px;color:#444">L</div><div class="ch" style="left:726.35px;width:57.25px;color:#444">M</div><div class="ch" style="left:783.6px;width:57.25px;color:#444">N</div><div class="ch" style="left:840.85px;width:57.25px;color:#444">O</div><div class="ch" style="left:898.1px;width:57.25px;color:#444">P</div><div class="ch" style="left:955.35px;width:57.25px;color:#444">Q</div><div class="ch" style="left:1012.6px;width:59.6px;color:#444">R</div>
<div class="rh" style="top:17.1px;color:#3d6650">1</div><div class="rh" style="top:32.715px;color:#444">2</div><div class="rh" style="top:48.33px;color:#444">3</div><div class="rh" style="top:63.945px;color:#444">4</div><div class="rh" style="top:79.56px;color:#444">5</div><div class="rh" style="top:95.175px;color:#444">6</div><div class="rh" style="top:110.79px;color:#444">7</div><div class="rh" style="top:126.405px;color:#444">8</div><div class="rh" style="top:142.02px;color:#444">9</div><div class="rh" style="top:157.635px;color:#444">10</div><div class="rh" style="top:173.25px;color:#444">11</div><div class="rh" style="top:188.865px;color:#444">12</div><div class="rh" style="top:204.48px;color:#444">13</div><div class="rh" style="top:220.095px;color:#444">14</div><div class="rh" style="top:235.71px;color:#444">15</div><div class="rh" style="top:251.325px;color:#444">16</div><div class="rh" style="top:266.94px;color:#444">17</div><div class="rh" style="top:282.555px;color:#444">18</div><div class="rh" style="top:298.17px;color:#444">19</div><div class="rh" style="top:313.785px;color:#444">20</div><div class="rh" style="top:329.4px;color:#444">21</div><div class="rh" style="top:345.015px;color:#444">22</div><div class="rh" style="top:360.63px;color:#444">23</div><div class="rh" style="top:376.245px;color:#444">24</div><div class="rh" style="top:391.86px;color:#444">25</div><div class="rh" style="top:407.475px;color:#444">26</div><div class="rh" style="top:423.09px;color:#444">27</div><div class="rh" style="top:438.705px;color:#444">28</div>
<div class="a" style="left:22.3px;top:31.915px;width:198.5px;height:1px;background:#6a6a6a"></div><div class="a" style="left:22.3px;top:46.83px;width:198.5px;height:1px;background:#6a6a6a"></div><div class="a" style="left:22.3px;top:62.345px;width:198.5px;height:1px;background:#6a6a6a"></div><div class="a" style="left:21.8px;top:32.415px;width:1px;height:30.43px;background:#6a6a6a"></div><div class="a" style="left:91.5px;top:32.415px;width:1px;height:30.43px;background:#6a6a6a"></div><div class="a" style="left:161.3px;top:32.415px;width:1px;height:30.43px;background:#6a6a6a"></div><div class="a" style="left:220.3px;top:32.415px;width:1px;height:30.43px;background:#6a6a6a"></div><div class="a" style="left:91.500px;top:15.5px;width:1px;height:16.915px;background:#5f6b78"></div>
<div class="cell" style="left:22.3px;width:69.7px;top:17.8px">列1</div><div class="cell" style="left:161.8px;width:59px;top:17.8px">列3</div><div class="cell" style="left:22.3px;width:69.7px;top:32.915px">1</div><div class="cell" style="left:92px;width:69.8px;top:32.915px">2</div><div class="cell" style="left:161.8px;width:59px;top:32.915px">haha</div><div class="cell" style="left:22.3px;width:69.7px;top:47.83px">11</div><div class="cell" style="left:92px;width:69.8px;top:47.83px">22</div><div class="cell" style="left:161.8px;width:59px;top:47.83px">heihei</div>
<svg class="a" style="left:0;top:0" width="240" height="50" viewBox="0 0 240 50" fill="none"><rect x="22.300" y="15.600" width="139.500" height="16.900" stroke="#25744a" stroke-width="1.600"/><rect x="159.600" y="30.300" width="4.600" height="4.600" fill="#217346" stroke="#fff" stroke-width="0.800"/></svg>
</div>
<div class="a" style="left:1064px;top:169px;width:16px;height:437.500px;background:#e6e6e6"></div><div class="a" style="left:1065px;top:170.500px;width:13.500px;height:13.500px;background:#fff;border:1px solid #c8c8c8"></div><div class="a" style="left:1065px;top:184.500px;width:13.500px;height:388px;background:#fff;border:1px solid #c8c8c8"></div><div class="a" style="left:1065px;top:592.500px;width:13.500px;height:13.500px;background:#fff;border:1px solid #c8c8c8"></div><svg class="a" style="left:1064px;top:169px" width="16" height="438" viewBox="0 0 16 438"><path d="M4.800 10h6l-3-3.500z" fill="#666"/><path d="M4.800 428.500h6l-3 3.500z" fill="#666"/></svg>
<div class="a" style="left:0;top:606px;width:1080px;height:17px;background:#e6e6e6;border-top:1px solid #cfcfcf"></div><div class="a" style="left:58.300px;top:606px;width:50px;height:15.800px;background:#fff;border-bottom:1.600px solid #217346"></div><div class="t" style="left:64.300px;top:605.300px;font-size:11.500px;color:#217346;text-shadow:0.300px 0 0 #217346">Sheet1</div><div class="t" style="left:114.4px;top:605.300px;font-size:11.500px;color:#444">Sheet3</div><div class="t" style="left:163.5px;top:605.300px;font-size:11.500px;color:#444">Sheet2</div><div class="t" style="left:212.5px;top:605.300px;font-size:11.500px;color:#444">Sheet4</div><div class="a" style="left:157.2px;top:609px;width:1px;height:11px;background:#c2c2c2"></div><div class="a" style="left:207px;top:609px;width:1px;height:11px;background:#c2c2c2"></div><div class="a" style="left:255.5px;top:609px;width:1px;height:11px;background:#c2c2c2"></div><svg class="a" style="left:0;top:606px" width="300" height="17" viewBox="0 606 300 17" fill="none">
<path d="M17.500 611.500l-3 3 3 3z" fill="#c4c4c4"/><path d="M31 611.500l3 3-3 3z" fill="#c4c4c4"/>
<circle cx="282" cy="614.500" r="6" stroke="#777" stroke-width="1"/><path d="M278.800 614.500h6.400M282 611.300v6.400" stroke="#666" stroke-width="1.200"/></svg>
<div class="a" style="left:657px;top:607.500px;width:13px;height:13.500px;background:#fff;border:1px solid #c8c8c8"></div><div class="a" style="left:670px;top:607.500px;width:357.500px;height:13.500px;background:#fff;border:1px solid #c8c8c8"></div><div class="a" style="left:1051px;top:607.500px;width:13px;height:13.500px;background:#fff;border:1px solid #c8c8c8"></div><svg class="a" style="left:640px;top:606px" width="440" height="17" viewBox="640 606 440 17" fill="none">
<path d="M646 610v1.400M646 613.800v1.400M646 617.600v1.400" stroke="#aaa" stroke-width="1.200"/>
<path d="M665.500 611.200v6l-3.500-3z" fill="#555"/><path d="M1055.500 611.200v6l3.500-3z" fill="#555"/></svg>
<div class="a" style="left:0;top:623px;width:1080px;height:19px;background:#f3f3f3"></div><div class="t" style="left:6.700px;top:625.700px;font-size:10px;color:#444">就绪</div><div class="a" style="left:824px;top:623px;width:33.500px;height:19px;background:#c9c9c9"></div><svg class="a" style="left:820px;top:623px" width="260" height="19" viewBox="820 623 260 19" fill="none" stroke="#8a8a8a" stroke-width="0.900">
<rect x="835.500" y="627.500" width="10.500" height="10"/><path d="M839 627.500v10M842.500 627.500v10M835.500 631h10.500M835.500 634.500h10.500"/>
<rect x="869.500" y="627.500" width="10" height="10"/><rect x="872" y="630" width="5" height="5"/><path d="M873 632.500h3"/>
<path d="M903 637.500v-10h10.500v10M906.500 627.500v6h4v-6M903 637.500h1.500M906 637.500h1.500M909 637.500h1.500M912 637.500h1.500"/>
<path d="M930.500 632.500h5" stroke="#999"/><path d="M943 632.500h82" stroke="#b0b0b0"/><path d="M1029.500 632.500h5.500M1032.200 629.800v5.500" stroke="#999"/>
<rect x="981" y="626.800" width="4.400" height="11.600" fill="#6a6a6a" stroke="none"/></svg><div class="t" style="left:1047.500px;top:625.500px;font-size:10.500px;color:#444">100%</div>
<div class="a" style="left:0;top:641px;width:1080px;height:6px;background:#c8cedc;border-top:1px solid #d9dde6"></div><div class="a" style="left:373px;top:642px;width:40px;height:5px;background:#e4e7ee"></div><div class="a" style="left:996px;top:645px;width:3px;height:2px;background:#aab1c2"></div><div class="a" style="left:1002px;top:645px;width:3px;height:2px;background:#aab1c2"></div><div class="a" style="left:1007px;top:645px;width:3px;height:2px;background:#aab1c2"></div><div class="a" style="left:1071px;top:643px;width:1.500px;height:4px;background:#8f97aa"></div>
<div class="a" id="dlg" style="left:311.5px;top:107.5px;width:507px;height:478.300px;background:#f0f0f0;border:1px solid #8c8c8c;box-shadow:0 1px 7px 1px rgba(0,0,0,.3)">
<div class="a" style="left:0;top:0;width:505px;height:24.500px;background:#fff"></div>
<div class="dl" style="left:5.7px;top:6.5px;color:#111;font-size:10.2px;">设置单元格格式</div>
<div class="dl" style="left:444.5px;top:4.7px;color:#222;font-size:11.5px;text-shadow:0.350px 0 0 #222;font-family:'Liberation Sans',sans-serif">?</div>
<svg class="a" style="left:481.7px;top:7.3px" width="10" height="10" viewBox="0 0 10 10"><path d="M0.500 0.500l8 7.800M8.500 0.500l-8 7.800" stroke="#222" stroke-width="1.200" fill="none"/></svg>
<div class="a" style="left:5.3px;top:51.5px;width:494.300px;height:386.800px;background:#fff;border:1px solid #dadada"></div>
<div class="a" style="left:5.5px;top:34.5px;width:45.8px;height:17.500px;background:#f0f0f0;border:1px solid #e3e3e3;border-bottom:none"></div><div class="dl c" style="left:5.5px;width:44.8px;top:35.8px">数字</div>
<div class="a" style="left:99.7px;top:34.5px;width:42.7px;height:17.500px;background:#f0f0f0;border:1px solid #e3e3e3;border-bottom:none"></div><div class="dl c" style="left:99.7px;width:41.7px;top:35.8px">字体</div>
<div class="a" style="left:141.4px;top:34.5px;width:46.8px;height:17.500px;background:#f0f0f0;border:1px solid #e3e3e3;border-bottom:none"></div><div class="dl c" style="left:141.4px;width:45.8px;top:35.8px">边框</div>
<div class="a" style="left:187.2px;top:34.5px;width:46.8px;height:17.500px;background:#f0f0f0;border:1px solid #e3e3e3;border-bottom:none"></div><div class="dl c" style="left:187.2px;width:45.8px;top:35.8px">填充</div>
<div class="a" style="left:233px;top:34.5px;width:46px;height:17.500px;background:#f0f0f0;border:1px solid #e3e3e3;border-bottom:none"></div><div class="dl c" style="left:233px;width:45px;top:35.8px">保护</div>
<div class="a" style="left:49.8px;top:32.3px;width:50.4px;height:21px;background:#fff;border:1px solid #dadada;border-bottom:none"></div><div class="dl c" style="left:50px;width:50px;top:35.3px">对齐</div>
<div class="dl" style="left:12.8px;top:61.9px;color:#222;font-size:10.2px;">文本对齐方式</div>
<div class="a" style="left:79px;top:67.9px;width:308.5px;height:1px;background:#e8e8e8"></div>
<div class="dl" style="left:20.5px;top:81.5px;color:#222;font-size:10.2px;">水平对齐(<u>H</u>):</div>
<div class="dd" style="left:20.2px;top:96.7px;width:99.500px;height:21.600px"><div class="a" style="left:1px;top:3.800px;width:82px;height:12px;background:#0078d7"></div><div class="ddb"></div></div><div class="dl" style="left:23px;top:101.7px;color:#fff;font-size:10.2px;">跨列居中</div>
<div class="dl" style="left:128.5px;top:103.3px;color:#6d6d6d;font-size:10.2px;">缩进(I):</div>
<div class="dd" style="left:127.5px;top:118.8px;width:55px;height:19.800px;border-color:#c8c8c8"><div class="a" style="right:0;top:0;width:13.500px;height:17.800px;background:#f0f0f0;border-left:1px solid #d0d0d0"></div><div class="a" style="right:0;top:8px;width:13.500px;height:1px;background:#d0d0d0"></div></div><div class="dl" style="left:131.5px;top:120.5px;color:#222;font-size:10.8px;">0</div>
<div class="dl" style="left:20.5px;top:123.3px;color:#222;font-size:10.2px;">垂直对齐(<u>V</u>):</div>
<div class="dd" style="left:20.2px;top:139.1px;width:99.500px;height:21.300px"><div class="ddb"></div></div><div class="dl" style="left:23px;top:143.7px;color:#222;font-size:10.2px;">居中</div>
<div class="cb" style="left:20.8px;top:165.9px;border-color:#c4c4c4"></div><div class="dl" style="left:34.8px;top:166px;color:#7a7a7a;font-size:10.2px;">两端分散对齐(E)</div>
<div class="dl" style="left:12.8px;top:189.5px;color:#222;font-size:10.2px;">文本控制</div>
<div class="a" style="left:58.6px;top:195.5px;width:328.9px;height:1px;background:#e8e8e8"></div>
<div class="cb" style="left:20.3px;top:211.2px"></div><div class="dl" style="left:34.9px;top:210.5px;color:#222;font-size:10.2px;">自动换行(<u>W</u>)</div>
<div class="cb" style="left:20.3px;top:231.2px"></div><div class="dl" style="left:34.9px;top:230.5px;color:#222;font-size:10.2px;">缩小字体填充(<u>K</u>)</div>
<div class="cb" style="left:20.3px;top:251.2px"></div><div class="dl" style="left:34.9px;top:250.5px;color:#222;font-size:10.2px;">合并单元格(<u>M</u>)</div>
<div class="dl" style="left:12.8px;top:273.5px;color:#222;font-size:10.2px;">从右到左</div>
<div class="a" style="left:58.6px;top:279.5px;width:328.9px;height:1px;background:#e8e8e8"></div>
<div class="dl" style="left:20.5px;top:294.3px;color:#222;font-size:10.2px;">文字方向(<u>T</u>):</div>
<div class="dd" style="left:20.3px;top:309px;width:88px;height:21px"><div class="ddb"></div></div><div class="dl" style="left:23px;top:313.7px;color:#222;font-size:10.2px;">根据内容</div>
<div class="a" style="left:396.5px;top:68px;width:96px;height:151.500px;border:1px solid #e8e8e8"></div><div class="dl" style="left:399.1px;top:61.8px;color:#6d6d6d;background:#fff;padding:0 2px">方向</div>
<div class="a" style="left:403.8px;top:80.9px;width:20.500px;height:110px;border:1px solid #c9c9c9;background:#fff"></div><div class="a" style="left:426.9px;top:80.9px;width:57px;height:110px;border:1px solid #c9c9c9;background:#fff"></div>
<div class="dl" style="left:408.9px;top:123.5px;color:#111;font-size:10.2px;">文</div>
<div class="dl" style="left:408.9px;top:136.9px;color:#111;font-size:10.2px;">本</div>
<div class="dl" style="left:433.5px;top:132px;color:#111;font-size:10.2px;">文本</div>
<svg class="a" style="left:426.9px;top:80.9px" width="57" height="110" viewBox="739.400 189.400 57 110" fill="none"><path d="M743.2 292l3 -3 3 3 -3 3z" fill="#b9b9b9" stroke="#8f8f8f" stroke-width="0.600"/><circle cx="758.364" cy="290.399" r="0.800" fill="#c2c2c2"/><circle cx="769.7" cy="285.703" r="0.800" fill="#c2c2c2"/><path d="M776.434 278.234l3 -3 3 3 -3 3z" fill="#b9b9b9" stroke="#8f8f8f" stroke-width="0.600"/><circle cx="786.903" cy="268.5" r="0.800" fill="#c2c2c2"/><circle cx="791.599" cy="257.164" r="0.800" fill="#c2c2c2"/><path d="M767.500 245H791" stroke="#444" stroke-width="1" shape-rendering="crispEdges"/><path d="M790 245l3.200 -3.200 3.200 3.200 -3.200 3.200z" fill="#c4202f"/><circle cx="791.599" cy="232.836" r="0.800" fill="#c2c2c2"/><circle cx="786.903" cy="221.5" r="0.800" fill="#c2c2c2"/><path d="M776.434 211.766l3 -3 3 3 -3 3z" fill="#b9b9b9" stroke="#8f8f8f" stroke-width="0.600"/><circle cx="769.7" cy="204.297" r="0.800" fill="#c2c2c2"/><circle cx="758.364" cy="199.601" r="0.800" fill="#c2c2c2"/><path d="M743.2 198l3 -3 3 3 -3 3z" fill="#b9b9b9" stroke="#8f8f8f" stroke-width="0.600"/></svg>
<div class="dd" style="left:403.8px;top:194.7px;width:54.500px;height:19px;border-color:#d4d4d4"><div class="a" style="left:0;top:0;width:39px;height:17px;background:#f0f0f0"></div><div class="a" style="right:0;top:0;width:14px;height:17px;background:#f0f0f0;border-left:1px solid #d0d0d0"></div><div class="a" style="right:0;top:8px;width:14px;height:1px;background:#d0d0d0"></div></div><div class="dl" style="left:407.5px;top:197.3px;color:#8a8a8a;font-size:10.8px;">0</div>
<div class="dl" style="left:461.5px;top:199.2px;color:#111;font-size:10.2px;">度(<u>D</u>)</div>
<svg class="a" style="left:0;top:0" width="505" height="475" viewBox="312.5 108.5 505 475" fill="none">
<path d="M422 214.800l3.200 3.200 3.200-3.200" stroke="#6a6a6a" stroke-width="1"/>
<path d="M422 257l3.200 3.200 3.200-3.200" stroke="#6a6a6a" stroke-width="1"/>
<path d="M410.500 426.800l3.200 3.200 3.200-3.200" stroke="#6a6a6a" stroke-width="1"/>
<path d="M485.800 233.500h4.400l-2.200-2.600zM485.800 240h4.400l-2.200 2.600z" fill="#333"/>
<path d="M761.800 309.300h4.400l-2.200-2.600z" fill="#333"/><path d="M761.800 315.800h4.400l-2.200 2.600z" fill="#999"/>
</svg>
<div class="a" style="left:366.5px;top:446.8px;width:63px;height:22.500px;background:#e1e1e1;border:1.400px solid #2a8be0"></div><div class="dl c" style="left:366.5px;width:63px;top:452px;color:#111">确定</div><div class="a" style="left:437.8px;top:446.8px;width:62.500px;height:22.500px;background:#e1e1e1;border:1px solid #b9b9b9"></div><div class="dl c" style="left:437.8px;width:62.500px;top:452px;color:#111">取消</div>
</div>
<svg class="a" style="left:0;top:0;pointer-events:none" width="1080" height="647" viewBox="0 0 1080 647" fill="none" stroke="#e8463b" stroke-width="1.600"><rect x="17.3" y="175.3" width="142.5" height="32.2"/><rect x="362.8" y="140.5" width="50" height="30.5"/><rect x="298.4" y="196.7" width="181.6" height="34.9"/><rect x="674.3" y="514.5" width="86.3" height="79.7"/></svg>
<svg class="a" style="left:815px;top:572px" width="250" height="50" viewBox="815 572 250 50">
<g fill="#fff" stroke="#b4b4b4" stroke-width="1" style="filter:drop-shadow(0.700px 0.700px 0.400px #a8a8a8)">
<path d="M840 581.500c-8.300 0-15 5.300-15 12 0 3.800 2.200 7 5.600 9.200l-1.500 4.800 5.400-2.900c1.700 0.500 3.600 0.800 5.500 0.800 8.300 0 15-5.300 15-12s-6.700-11.900-15-11.900z"/>
<path d="M853.500 590c-7 0-12.700 5-12.700 11.200s5.700 11.200 12.700 11.200c1.700 0 3.300-0.300 4.700-0.800l4.700 3-1.200-4.700c2.800-2 4.500-5.100 4.500-8.700 0-6.200-5.700-11.200-12.700-11.200z"/>
<circle cx="834.500" cy="589" r="1.500"/><circle cx="844.500" cy="589" r="1.500"/><circle cx="849.500" cy="598" r="1.300"/><circle cx="857.500" cy="598" r="1.300"/>
</g>
<g font-family="'Liberation Sans','Noto Sans CJK SC',sans-serif" font-size="26.500" fill="#fff" stroke="#bdbdbd" stroke-width="0.600" paint-order="stroke" style="filter:drop-shadow(1px 1px 0.500px #a2a2a2)"><text x="873" y="608.500" textLength="61" lengthAdjust="spacingAndGlyphs">Excel</text><text x="935.500" y="608.500" font-weight="300" textLength="108.500" lengthAdjust="spacingAndGlyphs">教程自学</text></g>
</svg>
</div>
</body></html>
